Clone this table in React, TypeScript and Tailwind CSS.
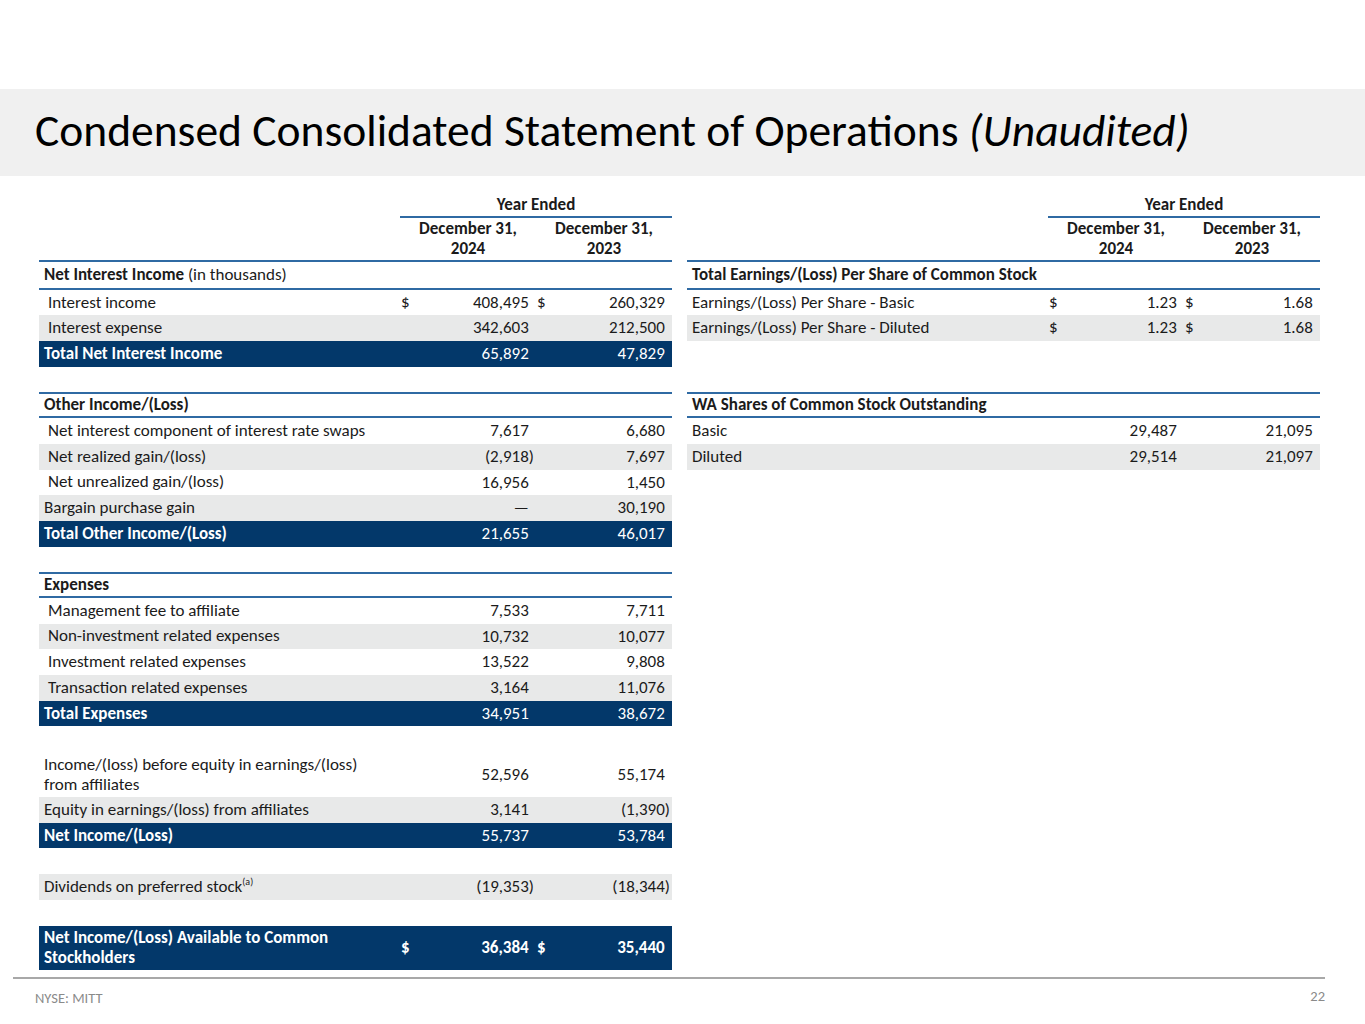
import React from "react";

type Cell = { v?: string; d?: boolean };
type RowT = {
  label: React.ReactNode;
  a?: Cell;
  b?: Cell;
  kind?: "plain" | "gray" | "navy" | "head" | "gap";
  indent?: boolean;
  tall?: number;
  boldNums?: boolean;
};

const font = { fontFamily: "Carlito, Lato, 'Liberation Sans', sans-serif" };

const Num = ({ c, bold }: { c?: Cell; bold?: boolean }) => {
  if (!c) return <div className="w-[136px]" />;
  const neg = c.v?.endsWith(")");
  return (
    <div className={`w-[136px] flex items-center justify-between pl-[1px] pr-[2px] ${bold ? "font-bold" : ""}`}>
      <span>{c.d ? "$" : ""}</span>
      <span>
        {c.v}
        {!neg && <span className="invisible">)</span>}
      </span>
    </div>
  );
};

const Row = ({ r }: { r: RowT }) => {
  const kind = r.kind ?? "plain";
  if (kind === "gap") return <div className="h-[25.7px]" />;
  const bg = kind === "gray" ? "bg-[#e8e9e9]" : kind === "navy" ? "bg-[#03386a] text-white" : "";
  const head = kind === "head" ? "font-bold border-y-2 border-[#2f6aa3]" : "";
  return (
    <div className={`flex items-center ${bg} ${head}`} style={{ height: r.tall ?? 25.7 }}>
      <div
        className={`w-[361px] leading-[20px] ${r.indent ? "pl-[9px]" : "pl-[5px]"} ${kind === "navy" ? "font-bold" : ""}`}
      >
        {r.label}
      </div>
      <Num c={r.a} bold={r.boldNums} />
      <Num c={r.b} bold={r.boldNums} />
    </div>
  );
};

const Header = () => (
  <div>
    <div className="flex">
      <div className="w-[361px]" />
      <div className="w-[272px] h-[25px] flex items-center justify-center font-bold border-b-2 border-[#2f6aa3]">
        Year Ended
      </div>
    </div>
    <div className="flex h-[44px] border-b-2 border-[#2f6aa3] font-bold leading-[20px]">
      <div className="w-[361px]" />
      <div className="w-[136px] flex items-center justify-center text-center">
        December 31,<br />2024
      </div>
      <div className="w-[136px] flex items-center justify-center text-center">
        December 31,<br />2023
      </div>
    </div>
  </div>
);

const left: RowT[] = [
  { label: <><b>Net Interest Income</b> (in thousands)</> },
  { label: "Interest income", a: { v: "408,495", d: true }, b: { v: "260,329", d: true }, indent: true },
  { label: "Interest expense", a: { v: "342,603" }, b: { v: "212,500" }, kind: "gray", indent: true },
  { label: "Total Net Interest Income", a: { v: "65,892" }, b: { v: "47,829" }, kind: "navy" },
  { label: "", kind: "gap" },
  { label: "Other Income/(Loss)", kind: "head" },
  { label: "Net interest component of interest rate swaps", a: { v: "7,617" }, b: { v: "6,680" }, indent: true },
  { label: "Net realized gain/(loss)", a: { v: "(2,918)" }, b: { v: "7,697" }, kind: "gray", indent: true },
  { label: "Net unrealized gain/(loss)", a: { v: "16,956" }, b: { v: "1,450" }, indent: true },
  { label: "Bargain purchase gain", a: { v: "—" }, b: { v: "30,190" }, kind: "gray" },
  { label: "Total Other Income/(Loss)", a: { v: "21,655" }, b: { v: "46,017" }, kind: "navy" },
  { label: "", kind: "gap" },
  { label: "Expenses", kind: "head" },
  { label: "Management fee to affiliate", a: { v: "7,533" }, b: { v: "7,711" }, indent: true },
  { label: "Non-investment related expenses", a: { v: "10,732" }, b: { v: "10,077" }, kind: "gray", indent: true },
  { label: "Investment related expenses", a: { v: "13,522" }, b: { v: "9,808" }, indent: true },
  { label: "Transaction related expenses", a: { v: "3,164" }, b: { v: "11,076" }, kind: "gray", indent: true },
  { label: "Total Expenses", a: { v: "34,951" }, b: { v: "38,672" }, kind: "navy" },
  { label: "", kind: "gap" },
  {
    label: <>Income/(loss) before equity in earnings/(loss)<br />from affiliates</>,
    a: { v: "52,596" },
    b: { v: "55,174" },
    tall: 45,
  },
  { label: "Equity in earnings/(loss) from affiliates", a: { v: "3,141" }, b: { v: "(1,390)" }, kind: "gray" },
  { label: "Net Income/(Loss)", a: { v: "55,737" }, b: { v: "53,784" }, kind: "navy" },
  { label: "", kind: "gap" },
  {
    label: <>Dividends on preferred stock<sup className="text-[10px] -top-[0.7em]">(a)</sup></>,
    a: { v: "(19,353)" },
    b: { v: "(18,344)" },
    kind: "gray",
  },
  { label: "", kind: "gap" },
  {
    label: <>Net Income/(Loss) Available to Common<br />Stockholders</>,
    a: { v: "36,384", d: true },
    b: { v: "35,440", d: true },
    kind: "navy",
    tall: 44,
    boldNums: true,
  },
];

const right: RowT[] = [
  { label: <b>Total Earnings/(Loss) Per Share of Common Stock</b> },
  { label: "Earnings/(Loss) Per Share - Basic", a: { v: "1.23", d: true }, b: { v: "1.68", d: true } },
  { label: "Earnings/(Loss) Per Share - Diluted", a: { v: "1.23", d: true }, b: { v: "1.68", d: true }, kind: "gray" },
  { label: "", kind: "gap" },
  { label: "", kind: "gap" },
  { label: "WA Shares of Common Stock Outstanding", kind: "head" },
  { label: "Basic", a: { v: "29,487" }, b: { v: "21,095" } },
  { label: "Diluted", a: { v: "29,514" }, b: { v: "21,097" }, kind: "gray" },
];

const Table = ({ rows }: { rows: RowT[] }) => (
  <div className="w-[633px]">
    <Header />
    {rows.map((r, i) => (
      <div key={i} className={i === 0 ? "border-b-2 border-[#2f6aa3]" : ""}>
        <Row r={r} />
      </div>
    ))}
  </div>
);

export default function App() {
  return (
    <div className="w-[1365px] h-[1024px] bg-white text-[#1b1b1b] text-[17px] relative" style={font}>
      <div className="h-[89px]" />
      <div className="h-[87px] bg-[#f0f0f0] flex items-center pl-[35px] pb-[4px]">
        <h1 className="text-[45.5px] text-black leading-none">
          Condensed Consolidated Statement of Operations <i>(Unaudited)</i>
        </h1>
      </div>
      <div className="flex gap-[15px] pl-[39px] pt-[17px]">
        <Table rows={left} />
        <Table rows={right} />
      </div>
      <div className="absolute left-[13px] right-[40px] top-[977px] border-t-2 border-[#a8a8a8]" />
      <div className="absolute left-[35px] right-[40px] top-[986px] flex justify-between text-[14.5px] text-[#8a8a8a]">
        <span className="pt-[2px]">NYSE: MITT</span>
        <span>22</span>
      </div>
    </div>
  );
}
